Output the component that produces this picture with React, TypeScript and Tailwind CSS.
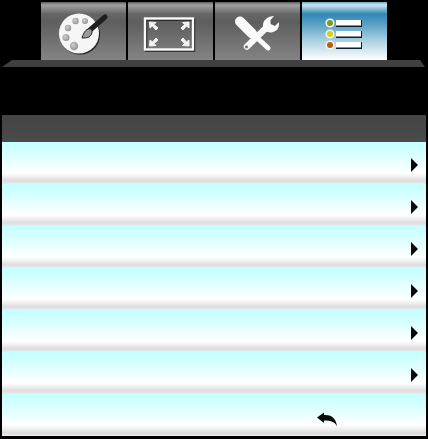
function Palette() {
  return (
    <svg width="85" height="58" viewBox="41 2 85 58">
      <defs>
        <radialGradient id="hole" cx="0.4" cy="0.4" r="0.7">
          <stop offset="0" stopColor="#d0d0d0" />
          <stop offset="1" stopColor="#8a8a8a" />
        </radialGradient>
      </defs>
      <ellipse cx="80" cy="34.5" rx="20" ry="20" fill="#1c1c1c" />
      <ellipse cx="79" cy="33.5" rx="20" ry="20" fill="#f6f6f6" />
      <circle cx="75.5" cy="21" r="3.2" fill="url(#hole)" />
      <circle cx="85" cy="21" r="3" fill="url(#hole)" />
      <circle cx="68" cy="28" r="3.2" fill="url(#hole)" />
      <circle cx="66" cy="37.5" r="3.5" fill="url(#hole)" />
      <circle cx="74" cy="46" r="4.2" fill="url(#hole)" />
      <path d="M105 17 L90 30" stroke="#1e1e1e" strokeWidth="5" strokeLinecap="round" />
      <path d="M82 38 C84 31 87 28 91 29 C93 31 92 35 89 37 C87 38 84 38 82 38 Z" fill="#9a9a9a" stroke="#222" strokeWidth="1" />
    </svg>
  );
}

function Screen() {
  const arrow = "#f2f2f2";
  return (
    <svg width="85" height="58" viewBox="128 2 85 58">
      <rect x="146" y="19.5" width="48" height="31" fill="none" stroke="#1a1a1a" strokeWidth="2.4" />
      <rect x="145" y="18.5" width="48" height="31" fill="none" stroke="#fafafa" strokeWidth="2.4" />
      <g fill={arrow} stroke={arrow}>
        <path d="M149.5 22 L156 22.5 L154 24.5 L158 28 L156 30 L152.5 26 L150 28 Z" />
        <path d="M189 22 L182.5 22.5 L184.5 24.5 L181 28 L183 30 L186.5 26 L189 28 Z" />
        <path d="M149.5 46 L156 45.5 L154 43.5 L158 40 L156 38 L152.5 42 L150 40 Z" />
        <path d="M189 46 L182.5 45.5 L184.5 43.5 L181 40 L183 38 L186.5 42 L189 40 Z" />
      </g>
    </svg>
  );
}

function Tools() {
  return (
    <svg width="85" height="58" viewBox="215 2 85 58">
      <path d="M240 21.5 L252 33.5" stroke="#fafafa" strokeWidth="10" strokeLinecap="round" />
      <path d="M252 33 L268 48" stroke="#fafafa" strokeWidth="5" strokeLinecap="round" />
      <path d="M247 46.5 L268 26" stroke="#fafafa" strokeWidth="6.5" strokeLinecap="round" />
      <path d="M274 16 C268 16 263 20 263 25 C263 30 268 34 273 32 C277 31 279.5 28 279 22 L275 26 L270.5 24 L270.5 20 Z" fill="#fafafa" />
      <circle cx="246.5" cy="47" r="1.4" fill="#666" />
    </svg>
  );
}

function ListIcon() {
  const rows = [
    { y: 23, c: "#7c9a22" },
    { y: 34, c: "#d8cc1c" },
    { y: 45, c: "#b85c18" },
  ];
  return (
    <svg width="85" height="58" viewBox="302 2 85 58">
      {rows.map((r) => (
        <g key={r.y}>
          <circle cx="330" cy={r.y} r="3.8" fill={r.c} stroke="#f4f8e8" strokeWidth="1.6" />
          <rect x="336" y={r.y - 3} width="26" height="7" fill="#10202a" />
          <rect x="336" y={r.y - 3} width="25" height="5.5" fill="#ffffff" />
        </g>
      ))}
    </svg>
  );
}

function Tab({ active, children }: { active?: boolean; children: React.ReactNode }) {
  return (
    <div
      className={
        active
          ? "w-[85px] h-[58px] bg-[linear-gradient(to_bottom,#6fa8c4_0px,#cfe6f0_3px,#2f88b4_12px,#4f9bc0_20px,#a8cfe0_38px,#ffffff_58px)]"
          : "w-[85px] h-[58px] bg-[linear-gradient(to_bottom,#5c5c5c_0px,#a2a2a2_3px,#666666_12px,#5e5e5e_20px,#848484_58px)]"
      }
    >
      {children}
    </div>
  );
}

function Row({ children }: { children?: React.ReactNode }) {
  return (
    <div className="h-[42px] flex items-center justify-end pr-[8px] bg-[linear-gradient(to_bottom,#c4ffff_0px,#d4ffff_10px,#ffffff_31px,#f0eff0_35px,#dddbdd_39px,#eceeee_42px)]">
      {children}
    </div>
  );
}

function Arrow() {
  return (
    <svg width="7" height="14" viewBox="0 0 7 14" className="mt-[3px]">
      <path d="M0 0 L7 7 L0 14 Z" fill="#0a0a0a" />
    </svg>
  );
}

export default function App() {
  return (
    <div className="w-[428px] h-[439px] bg-black overflow-hidden">
      <div className="flex gap-[2px] pl-[41px] pt-[2px]">
        <Tab><Palette /></Tab>
        <Tab><Screen /></Tab>
        <Tab><Tools /></Tab>
        <Tab active><ListIcon /></Tab>
      </div>
      <div className="mx-[2px] w-[423px] h-[7px] bg-[#404040] [clip-path:polygon(10px_0,418px_0,423px_100%,0_100%)]" />
      <div className="mt-[48px] mx-[2px] w-[424px]">
        <div className="h-[27px] bg-[linear-gradient(to_bottom,#444444,#4a4a4a)]" />
        {[0, 1, 2, 3, 4, 5].map((i) => (
          <Row key={i}><Arrow /></Row>
        ))}
        <Row>
          <svg width="20" height="15" viewBox="0 0 20 15" className="mr-[81px] mt-[8px]">
            <path d="M0 5.5 L7 0.5 L7 3 C13 2.5 19 5 20 14.5 L18.5 12 C16.5 9.5 12 8 7 8.5 L7 11 Z" fill="#0a0a0a" />
          </svg>
        </Row>
      </div>
    </div>
  );
}
